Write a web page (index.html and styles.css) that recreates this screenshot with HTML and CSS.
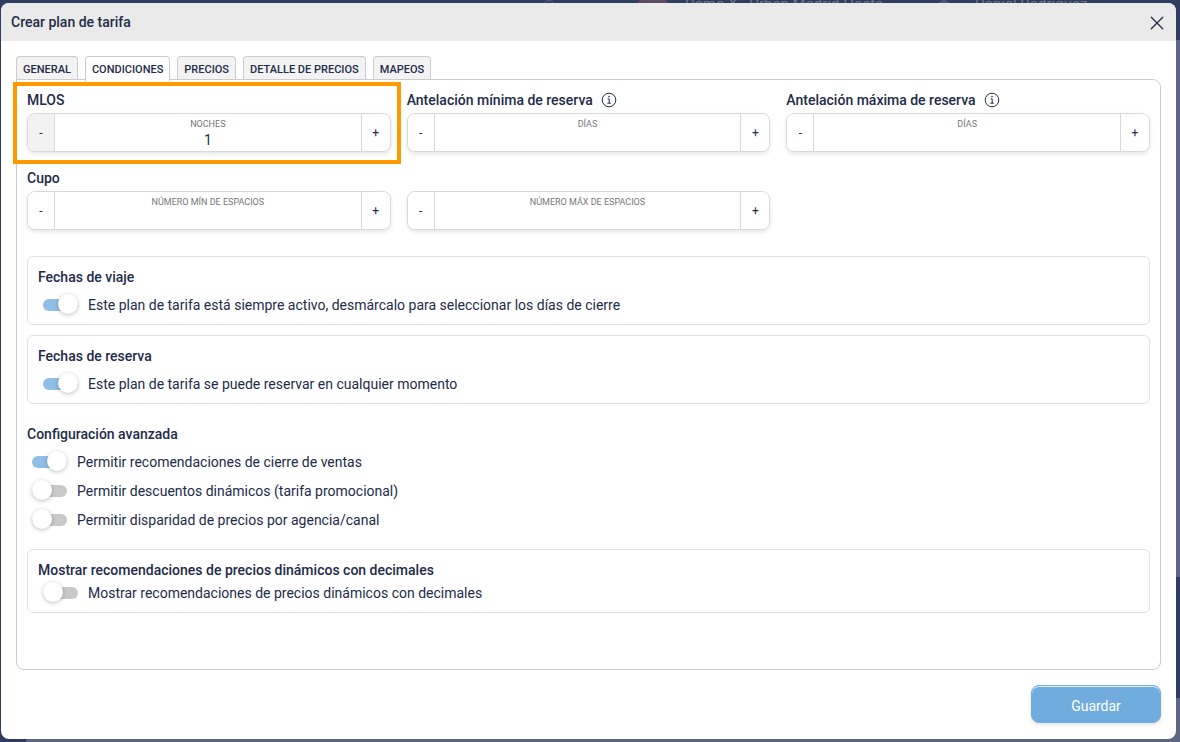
FILE: index.html
```html
<!DOCTYPE html>
<html lang="es">
<head>
<meta charset="utf-8">
<meta name="viewport" content="width=device-width, initial-scale=1">
<title>Crear plan de tarifa</title>
<link rel="stylesheet" href="styles.css">
</head>
<body>
<div class="backdrop" aria-hidden="true">
  <div class="backdrop-bar">
    <span class="backdrop-dot"></span>
    <span class="backdrop-badge"></span>
    <span class="backdrop-hotel">Demo X - Urban Madrid Hosta</span>
    <span class="backdrop-avatar"></span>
    <span class="backdrop-user">Daniel Rodriguez</span>
  </div>
  <div class="backdrop-side"></div>
  <div class="backdrop-widget"></div>
</div>

<main class="modal" role="dialog" aria-labelledby="modal-title">
  <header class="modal-header">
    <h1 class="modal-title" id="modal-title">Crear plan de tarifa</h1>
    <button class="close" type="button" aria-label="Cerrar">
      <svg width="14" height="14" viewBox="0 0 14 14" fill="none" stroke="currentColor" stroke-width="1.3" stroke-linecap="round"><path d="M1.3 1.3 12.7 12.7M12.7 1.3 1.3 12.7"/></svg>
    </button>
  </header>

  <form class="modal-body">
    <div class="tabs" role="tablist">
      <button class="tab" type="button" role="tab">GENERAL</button>
      <button class="tab tab-active" type="button" role="tab" aria-selected="true">CONDICIONES</button>
      <button class="tab" type="button" role="tab">PRECIOS</button>
      <button class="tab" type="button" role="tab">DETALLE DE PRECIOS</button>
      <button class="tab" type="button" role="tab">MAPEOS</button>
    </div>

    <div class="panel" role="tabpanel">
      <div class="fields">
        <section class="field highlighted">
          <h2 class="heading">MLOS</h2>
          <div class="stepper">
            <button class="step" type="button" disabled>-</button>
            <div class="value">
              <label class="caption" for="mlos">NOCHES</label>
              <input class="number" id="mlos" type="text" inputmode="numeric" value="1">
            </div>
            <button class="step step-up" type="button">+</button>
          </div>
        </section>

        <section class="field">
          <h2 class="heading">Antelación mínima de reserva
            <svg class="info" viewBox="0 0 16 16" fill="none" stroke="currentColor"><circle cx="8" cy="8" r="6.8"/><path d="M6.6 6.9H8.2V11M6.3 11.2H9.9"/><circle cx="8" cy="4.6" r=".8" fill="currentColor" stroke="none"/></svg>
          </h2>
          <div class="stepper">
            <button class="step" type="button">-</button>
            <div class="value">
              <label class="caption" for="min-days">DÍAS</label>
              <input class="number" id="min-days" type="text" inputmode="numeric">
            </div>
            <button class="step step-up" type="button">+</button>
          </div>
        </section>

        <section class="field">
          <h2 class="heading">Antelación máxima de reserva
            <svg class="info" viewBox="0 0 16 16" fill="none" stroke="currentColor"><circle cx="8" cy="8" r="6.8"/><path d="M6.6 6.9H8.2V11M6.3 11.2H9.9"/><circle cx="8" cy="4.6" r=".8" fill="currentColor" stroke="none"/></svg>
          </h2>
          <div class="stepper">
            <button class="step" type="button">-</button>
            <div class="value">
              <label class="caption" for="max-days">DÍAS</label>
              <input class="number" id="max-days" type="text" inputmode="numeric">
            </div>
            <button class="step step-up" type="button">+</button>
          </div>
        </section>

        <section class="field">
          <h2 class="heading">Cupo</h2>
          <div class="stepper">
            <button class="step" type="button">-</button>
            <div class="value">
              <label class="caption" for="min-spaces">NÚMERO MÍN DE ESPACIOS</label>
              <input class="number" id="min-spaces" type="text" inputmode="numeric">
            </div>
            <button class="step step-up" type="button">+</button>
          </div>
        </section>

        <section class="field">
          <div class="stepper">
            <button class="step" type="button">-</button>
            <div class="value">
              <label class="caption" for="max-spaces">NÚMERO MÁX DE ESPACIOS</label>
              <input class="number" id="max-spaces" type="text" inputmode="numeric">
            </div>
            <button class="step step-up" type="button">+</button>
          </div>
        </section>
      </div>

      <div class="cards">
        <section class="card">
          <h2 class="heading">Fechas de viaje</h2>
          <label class="option"><input class="switch" type="checkbox" checked>Este plan de tarifa está siempre activo, desmárcalo para seleccionar los días de cierre</label>
        </section>
        <section class="card">
          <h2 class="heading">Fechas de reserva</h2>
          <label class="option"><input class="switch" type="checkbox" checked>Este plan de tarifa se puede reservar en cualquier momento</label>
        </section>
      </div>

      <section class="advanced">
        <h2 class="heading">Configuración avanzada</h2>
        <label class="option"><input class="switch" type="checkbox" checked>Permitir recomendaciones de cierre de ventas</label>
        <label class="option"><input class="switch" type="checkbox">Permitir descuentos dinámicos (tarifa promocional)</label>
        <label class="option"><input class="switch" type="checkbox">Permitir disparidad de precios por agencia/canal</label>
      </section>

      <section class="card card-tight">
        <h2 class="heading">Mostrar recomendaciones de precios dinámicos con decimales</h2>
        <label class="option"><input class="switch" type="checkbox">Mostrar recomendaciones de precios dinámicos con decimales</label>
      </section>
    </div>

    <footer class="actions">
      <button class="save" type="submit">Guardar</button>
    </footer>
  </form>
</main>
</body>
</html>
```
FILE: styles.css
```css
* {
  box-sizing: border-box;
}

body {
  position: relative;
  display: flex;
  min-height: 100vh;
  margin: 0;
  padding: 3px 4px 3px 1px;
  background: #5a6682;
  color: #222b49;
  font: 14px/20px Roboto, "Liberation Sans", sans-serif;
}

button,
input {
  margin: 0;
  color: inherit;
  font: inherit;
}

/* Dimmed application behind the dialog */
.backdrop {
  position: absolute;
  inset: 0;
  overflow: hidden;
}

.backdrop-bar {
  position: absolute;
  inset: 0 0 auto;
  height: 40px;
  background: #2e3e60;
  color: #6a7690;
  font-size: 15px;
  line-height: 16px;
}

.backdrop-bar span {
  position: absolute;
  top: -4px;
  white-space: nowrap;
}

.backdrop-bar .backdrop-dot {
  left: 543px;
  top: 0;
  width: 12px;
  height: 12px;
  border: 1px solid #53617f;
  border-radius: 50%;
}

.backdrop-bar .backdrop-badge {
  left: 638px;
  top: 0;
  width: 30px;
  height: 12px;
  border-radius: 4px;
  background: #5f4c66;
}

.backdrop-bar .backdrop-hotel {
  left: 685px;
}

.backdrop-bar .backdrop-avatar {
  left: 938px;
  top: 0;
  width: 12px;
  height: 12px;
  border-radius: 50%;
  background: #4a597a;
}

.backdrop-bar .backdrop-user {
  left: 975px;
}

.backdrop-side {
  position: absolute;
  inset: 40px auto 0 0;
  width: 26px;
  background: #2c3b5e;
}

.backdrop-widget {
  position: absolute;
  right: 0;
  bottom: 44px;
  width: 60px;
  height: 121px;
  background: #2e3e60;
}

.modal {
  position: relative;
  display: flex;
  flex: 1;
  flex-direction: column;
  min-width: 0;
  overflow: hidden;
  border-radius: 8px;
  background: #fff;
}

.modal-header {
  display: flex;
  align-items: center;
  justify-content: space-between;
  height: 38px;
  padding: 0 12px 0 10px;
  background: #eaeaea;
}

.modal-title {
  margin: 0;
  font-size: 14px;
  font-weight: 500;
}

.close {
  display: flex;
  padding: 2px 0 0;
  border: 0;
  background: none;
}

.modal-body {
  display: flex;
  flex: 1;
  flex-direction: column;
  padding: 15px 15px 16px;
}

.tabs {
  display: flex;
  gap: 7px;
}

.tab {
  height: 24px;
  padding: 2px 6px 0;
  border: 1px solid #ccc;
  border-bottom: 0;
  border-radius: 4px 4px 0 0;
  background: #f3f3f3;
  font-size: 11px;
  font-weight: 500;
}

.tab-active {
  z-index: 1;
  height: 25px;
  margin-bottom: -1px;
  background: #fff;
}

.panel {
  flex: 1;
  margin-top: -1px;
  padding: 10px;
  border: 1px solid #ccc;
  border-radius: 0 8px 8px 8px;
}

.fields {
  display: grid;
  grid-template-columns: repeat(3, 1fr);
  gap: 16px;
}

.field {
  position: relative;
  display: flex;
  flex-direction: column;
  justify-content: flex-end;
  gap: 3px;
}

.highlighted::after {
  position: absolute;
  inset: -8px -10px -12px -14px;
  border: 4px solid #f90;
  content: "";
  pointer-events: none;
}

.heading {
  display: flex;
  align-items: center;
  gap: 8px;
  margin: 0;
  font-size: 14px;
  font-weight: 500;
  line-height: 20px;
}

.info {
  width: 16px;
  height: 16px;
}

.stepper {
  display: flex;
  height: 39px;
  overflow: hidden;
  border: 1px solid #d9d9d9;
  border-radius: 8px;
  background: #fff;
  box-shadow: 0 2px 4px rgba(0, 0, 0, 0.1);
}

.step {
  width: 26px;
  padding: 0;
  border: 0;
  background: #fff;
  font-size: 12px;
}

.step-up {
  width: 28px;
}

.step:disabled {
  background: #f2f2f2;
}

.value {
  display: flex;
  flex: 1;
  flex-direction: column;
  align-items: center;
  min-width: 0;
  padding-top: 4px;
  border: solid #d9d9d9;
  border-width: 0 1px;
}

.caption {
  color: #777;
  font-size: 9px;
  line-height: 12px;
}

.number {
  width: 100%;
  height: 20px;
  padding: 0;
  border: 0;
  background: none;
  text-align: center;
}

.cards {
  display: grid;
  gap: 10px;
  margin-top: 26px;
}

.card {
  display: grid;
  gap: 8px;
  padding: 10px 10px 8px;
  border: 1px solid #e2e2e2;
  border-radius: 6px;
}

.card-tight {
  gap: 3px;
  margin-top: 18px;
}

.advanced {
  display: grid;
  gap: 8px;
  margin-top: 20px;
}

.option {
  display: flex;
  align-items: center;
  gap: 10px;
  padding-left: 5px;
  line-height: 21px;
}

.switch {
  position: relative;
  flex: none;
  width: 35px;
  height: 12px;
  margin-bottom: 1px;
  border-radius: 6px;
  background: #c9c9c9;
  appearance: none;
}

.switch::before {
  position: absolute;
  top: -5px;
  left: 0;
  width: 20px;
  height: 20px;
  border-radius: 50%;
  background: #fff;
  box-shadow: 0 1px 4px rgba(0, 0, 0, 0.25);
  content: "";
}

.switch:checked {
  background: #90bee6;
}

.switch:checked::before {
  left: 15px;
}

.actions {
  display: flex;
  justify-content: flex-end;
  margin-top: 15px;
}

.save {
  width: 130px;
  height: 38px;
  padding: 4px 0 0;
  border: 1px solid #71acdf;
  border-radius: 8px;
  background: #71acdf;
  box-shadow: inset 0 1px 0 #e6f1fa, 0 2px 4px rgba(0, 0, 0, 0.1);
  color: #fff;
}
```
